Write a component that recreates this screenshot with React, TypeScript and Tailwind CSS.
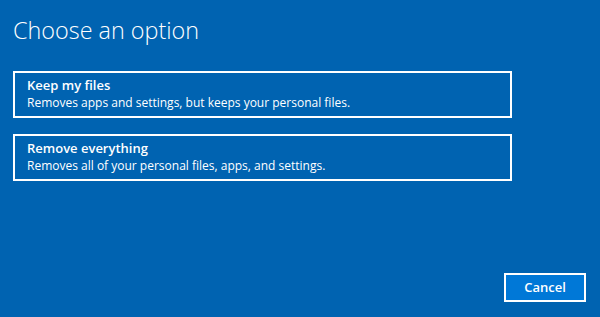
export default function App() {
  const opts = [
    { t: "Keep my files", d: "Removes apps and settings, but keeps your personal files." },
    { t: "Remove everything", d: "Removes all of your personal files, apps, and settings." },
  ];
  return (
    <div
      className="w-[600px] h-[317px] bg-[#0063b1] text-white flex flex-col px-[13px] pt-[14px] pb-[15px] overflow-hidden"
      style={{ fontFamily: '"Open Sans", "Noto Sans", sans-serif' }}
    >
      <h1 className="text-[23.4px] leading-[32px] font-light">Choose an option</h1>
      <div className="mt-[25px] flex flex-col gap-[16px]">
        {opts.map((o) => (
          <div key={o.t} className="w-[499px] border-2 border-white pl-[12px] pt-[4px] pb-[5px]">
            <div className="text-[13px] leading-[17px] font-semibold">{o.t}</div>
            <div className="text-[12px] leading-[17px]">{o.d}</div>
          </div>
        ))}
      </div>
      <div className="mt-auto flex justify-end pr-[1px]">
        <button className="w-[82px] h-[29px] border-2 border-white bg-[#0078d7] text-[13px] font-semibold leading-none">
          Cancel
        </button>
      </div>
    </div>
  );
}
